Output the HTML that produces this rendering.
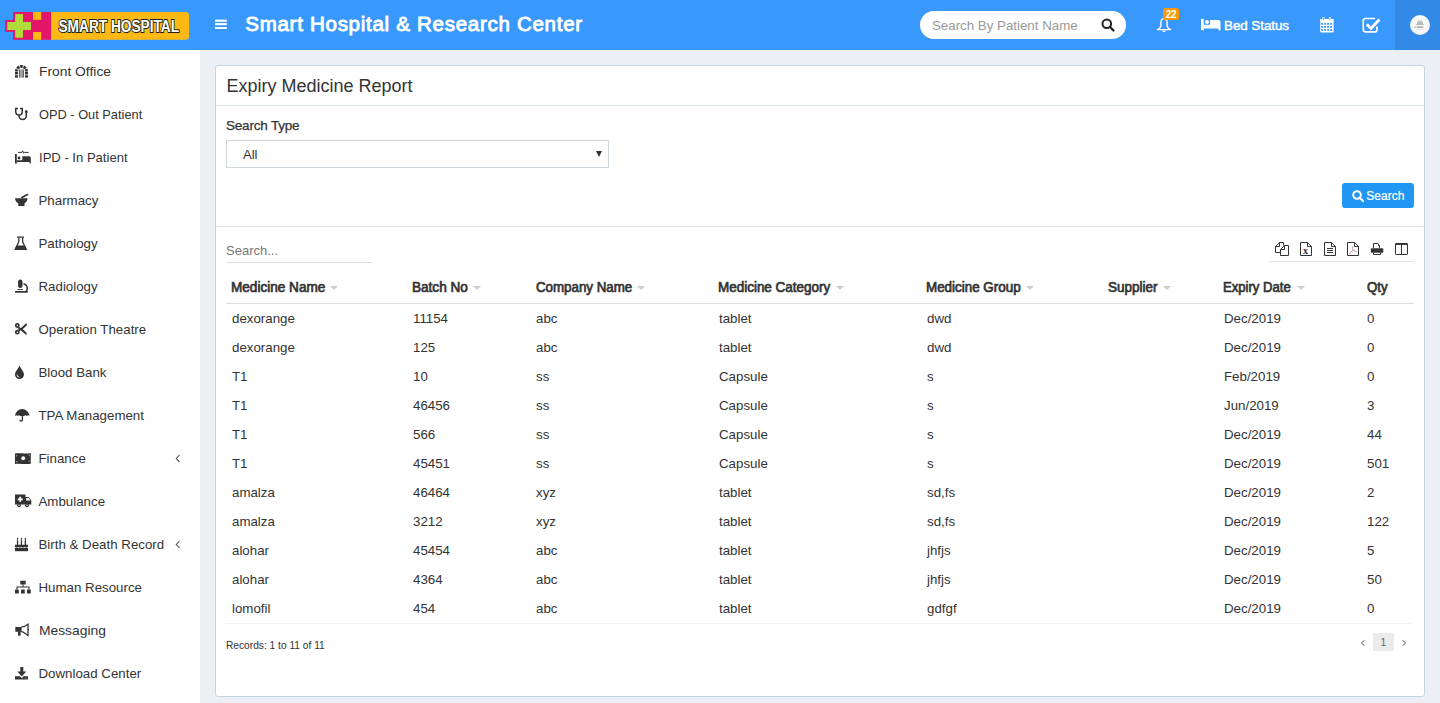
<!DOCTYPE html>
<html><head><meta charset="utf-8">
<style>
*{box-sizing:border-box;margin:0;padding:0}
html,body{width:1440px;height:703px;overflow:hidden;font-family:"Liberation Sans",sans-serif;background:#ecf0f5;color:#333;position:relative}
.t{position:absolute;white-space:nowrap;line-height:1}
svg{position:absolute;overflow:visible}
.hdr{position:absolute;left:0;top:0;width:1440px;height:50px;background:#3898fc}
.avb{position:absolute;left:1395px;top:0;width:45px;height:50px;background:#3289e6}
.srch{position:absolute;left:920px;top:11px;width:206px;height:28px;background:#fff;border-radius:14px}
.side{position:absolute;left:0;top:50px;width:200px;height:653px;background:#fff}
.nav{font-size:13.3px;color:#333}
.box{position:absolute;left:215px;top:65px;width:1210px;height:632px;background:#fff;border:1px solid #c5d5df;border-radius:3px}
.hl{position:absolute;height:1px}
.th{font-size:14px;color:#333;-webkit-text-stroke:0.7px #333;transform-origin:0 0}
.td{font-size:13.3px;color:#333}
.arr{position:absolute;width:0;height:0;border-left:4px solid transparent;border-right:4px solid transparent;border-top:4.5px solid #ccc}
</style></head><body>
<div class="hdr"></div>
<div class="avb"></div>
<!-- logo -->
<svg style="left:0;top:0" width="200" height="50" viewBox="0 0 200 50">
  <rect x="47" y="12" width="142" height="27.8" rx="3.5" fill="#fdb913"/>
  <rect x="13" y="12" width="38" height="27.8" fill="#e3166a"/>
  <rect x="5.1" y="20" width="8" height="11.8" fill="#e3166a"/>
  <path d="M15.1 14.1h7.9v8h8v7.9h-8v7.7h-7.9v-7.7h-7.9v-7.9h7.9z" fill="#b0dc3a"/>
  <rect x="33" y="12" width="8.2" height="7.8" fill="#fdb913"/>
  <rect x="33" y="32" width="8.2" height="7.8" fill="#fdb913"/>
  <text x="58.5" y="32.2" font-family="Liberation Sans" font-weight="bold" font-size="16.8" fill="#fff" stroke="#222" stroke-width="2" paint-order="stroke" textLength="120.5" lengthAdjust="spacingAndGlyphs">SMART HOSPITAL</text>
</svg>
<!-- burger -->
<svg style="left:215px;top:19px" width="12" height="11"><rect x="0" y="0.6" width="11.8" height="2.2" fill="#fff"/><rect x="0" y="4.1" width="11.8" height="2.1" fill="#fff"/><rect x="0" y="8" width="11.8" height="2" fill="#fff"/></svg>
<div class="t" style="left:245.3px;top:13.5px;font-size:20.5px;color:#fff;-webkit-text-stroke:0.9px #fff;letter-spacing:0.72px">Smart Hospital &amp; Research Center</div>
<div class="srch"></div>
<div class="t" style="left:932px;top:18.5px;font-size:13.3px;color:#999">Search By Patient Name</div>
<svg style="left:1101px;top:18px" width="14" height="14" viewBox="0 0 14 14"><circle cx="5.8" cy="5.8" r="4.3" fill="none" stroke="#222" stroke-width="2"/><path d="M9 9l3.5 3.5" stroke="#222" stroke-width="2.4" stroke-linecap="round"/></svg>
<!-- bell -->
<svg style="left:1156px;top:16px" width="16" height="18" viewBox="0 0 16 18"><path d="M8 2.6C5.9 2.6 4.9 4.3 4.9 6.5V9.8C4.9 11.6 3.3 12.7 1.5 13.6H14.5C12.7 12.7 11.1 11.6 11.1 9.8V6.5C11.1 4.3 10.1 2.6 8 2.6Z" fill="none" stroke="#fff" stroke-width="1.4" stroke-linejoin="round"/><path d="M6.3 14.4a1.7 1.7 0 0 0 3.4 0z" fill="#fff"/></svg>
<div style="position:absolute;left:1163px;top:8px;width:16px;height:12px;background:#ff9800;border-radius:2.5px"></div>
<div class="t" style="left:1163px;top:9.8px;width:16px;text-align:center;font-size:10px;font-weight:bold;color:#fff;letter-spacing:-0.3px">22</div>
<!-- bed -->
<svg style="left:1201px;top:18px" width="21" height="13" viewBox="0 0 21 13"><rect x="0" y="0.8" width="2.8" height="11.4" fill="#fff"/><circle cx="6" cy="3.9" r="2" fill="#fff"/><path d="M9 2h8.5a2 2 0 0 1 2 2v8.2h-2v-1.8H2.8V6.8H9z" fill="#fff"/></svg>
<div class="t" style="left:1224px;top:18.8px;font-size:13.4px;color:#fff;-webkit-text-stroke:0.45px #fff;letter-spacing:-0.05px">Bed Status</div>
<!-- calendar -->
<svg style="left:1319px;top:16px" width="16" height="17" viewBox="0 0 16 17">
<path d="M1.2 3h13.4v12.6a0.9 0.9 0 0 1-0.9 0.9H2.1a0.9 0.9 0 0 1-0.9-0.9z" fill="#fff"/>
<rect x="3.3" y="1" width="2.2" height="4" rx="1.1" fill="#fff"/><rect x="9.8" y="1" width="2.2" height="4" rx="1.1" fill="#fff"/>
<rect x="4" y="2" width="0.8" height="2.4" fill="#3898fc"/><rect x="10.5" y="2" width="0.8" height="2.4" fill="#3898fc"/>
<g fill="#3898fc"><rect x="2.2" y="7" width="1.9" height="1.8"/><rect x="5.2" y="7" width="1.9" height="1.8"/><rect x="8.2" y="7" width="1.9" height="1.8"/><rect x="11.2" y="7" width="1.9" height="1.8"/>
<rect x="2.2" y="10" width="1.9" height="1.8"/><rect x="5.2" y="10" width="1.9" height="1.8"/><rect x="8.2" y="10" width="1.9" height="1.8"/><rect x="11.2" y="10" width="1.9" height="1.8"/>
<rect x="2.2" y="13" width="1.9" height="1.8"/><rect x="5.2" y="13" width="1.9" height="1.8"/><rect x="8.2" y="13" width="1.9" height="1.8"/><rect x="11.2" y="13" width="1.9" height="1.8"/></g>
</svg>
<!-- check -->
<svg style="left:1362px;top:17px" width="20" height="16" viewBox="0 0 20 16"><path d="M14.9 9.5v3.5a1.8 1.8 0 0 1-1.8 1.8H3.1A1.8 1.8 0 0 1 1.3 13V3.3A1.8 1.8 0 0 1 3.1 1.5h10" fill="none" stroke="#fff" stroke-width="1.7"/><path d="M4.8 7.2l4.2 4.3 8.4-9" fill="none" stroke="#fff" stroke-width="2.8" stroke-linejoin="miter"/></svg>
<!-- avatar -->
<div style="position:absolute;left:1410px;top:15px;width:20px;height:20px;border-radius:50%;background:radial-gradient(circle at 50% 45%,#fafafa 45%,#e9e9e9 100%)"></div>
<svg style="left:1410px;top:15px" width="20" height="20" viewBox="0 0 20 20"><path d="M7 6.8h6v2.2H7z" fill="#bbb"/><path d="M8.3 5.3h3.4v1.5H8.3z" fill="#c4c4c4"/><rect x="6.2" y="9" width="7.6" height="0.8" fill="#aaa"/><rect x="4.2" y="11.5" width="1.6" height="1.2" fill="#aaa"/><rect x="6.5" y="11.2" width="6.8" height="1.8" fill="#b5b5b5"/><rect x="6.2" y="14" width="7.6" height="0.4" fill="#ccc"/></svg>

<div class="side"></div>
<div class="box"></div>
<!-- sidebar nav -->
<div class="t nav" style="left:38.5px;top:64.5px;transform:scaleX(1.04);transform-origin:0 0">Front Office</div>
<div class="t nav" style="left:38.5px;top:107.5px;transform:scaleX(0.963);transform-origin:0 0">OPD - Out Patient</div>
<div class="t nav" style="left:38.5px;top:150.5px;transform:scaleX(0.982);transform-origin:0 0">IPD - In Patient</div>
<div class="t nav" style="left:38.5px;top:193.5px">Pharmacy</div>
<div class="t nav" style="left:38.5px;top:236.5px">Pathology</div>
<div class="t nav" style="left:38.5px;top:279.5px">Radiology</div>
<div class="t nav" style="left:38.5px;top:322.5px">Operation Theatre</div>
<div class="t nav" style="left:38.5px;top:365.5px">Blood Bank</div>
<div class="t nav" style="left:38.5px;top:408.5px">TPA Management</div>
<div class="t nav" style="left:38.5px;top:451.5px">Finance</div>
<div class="t nav" style="left:38.5px;top:494.5px">Ambulance</div>
<div class="t nav" style="left:38.5px;top:537.5px">Birth &amp; Death Record</div>
<div class="t nav" style="left:38.5px;top:580.5px">Human Resource</div>
<div class="t nav" style="left:38.5px;top:623.5px;transform:scaleX(1.04);transform-origin:0 0">Messaging</div>
<div class="t nav" style="left:38.5px;top:666.5px">Download Center</div>
<svg style="left:175px;top:454px" width="6" height="9" viewBox="0 0 6 9"><path d="M4.5 1L1.3 4.5 4.5 8" fill="none" stroke="#444" stroke-width="1.05"/></svg>
<svg style="left:175px;top:540px" width="6" height="9" viewBox="0 0 6 9"><path d="M4.5 1L1.3 4.5 4.5 8" fill="none" stroke="#444" stroke-width="1.05"/></svg>
<!-- sidebar icons -->
<svg style="left:14px;top:64px" width="16" height="15" viewBox="0 0 16 15" fill="#333">
<path d="M2.5 7.4A5 5 0 0 1 12.5 7.4" fill="none" stroke="#333" stroke-width="3" stroke-dasharray="2.6 0.75" stroke-dashoffset="0.4"/>
<rect x="1" y="8" width="3" height="2.4"/><rect x="1" y="11.2" width="3" height="2.4"/>
<rect x="11" y="8" width="3" height="2.4"/><rect x="11" y="11.2" width="3" height="2.4"/>
<rect x="5.2" y="5.6" width="0.75" height="8"/><rect x="6.5" y="5.3" width="0.75" height="8.3"/><rect x="7.8" y="5.3" width="0.75" height="8.3"/><rect x="9.1" y="5.6" width="0.75" height="8"/>
</svg>
<svg style="left:14px;top:106px" width="16" height="16" viewBox="0 0 16 16">
<path d="M4 2.45H1.75V5.7A3.25 3.25 0 0 0 8.25 5.7V2.45H6" fill="none" stroke="#333" stroke-width="1.5"/>
<path d="M5 9.3V9.8A3.65 3.65 0 0 0 12.3 9.8V6.5" fill="none" stroke="#333" stroke-width="1.5"/>
<circle cx="12.3" cy="5.8" r="1.45" fill="#333"/>
</svg>
<svg style="left:14px;top:149px" width="18" height="16" viewBox="0 0 18 16" fill="#333">
<rect x="1" y="5" width="1.8" height="9.5"/>
<circle cx="5" cy="9" r="1.4"/>
<path d="M8.3 7.2h7a1.5 1.5 0 0 1 1.5 1.5v5.8h-1.2V13H2.8v-1.7h5.5z"/>
<path d="M4 3.4h3.8l0.9-1.6 0.9 2.4 0.8-0.8h4.2" fill="none" stroke="#333" stroke-width="1"/>
</svg>
<svg style="left:14px;top:193px" width="16" height="15" viewBox="0 0 16 15" fill="#333">
<path d="M1 5.3h12.6c-0.2 2.5-1.6 4.3-3.1 5.1v2.5H4.3v-2.5C2.7 9.6 1.2 7.8 1 5.3z"/>
<path d="M7.8 4.5l5.7-3" stroke="#333" stroke-width="1.6" stroke-linecap="round"/>
</svg>
<svg style="left:14px;top:235px" width="14" height="16" viewBox="0 0 14 16" fill="#333">
<rect x="3" y="1.5" width="7" height="1.3"/>
<path d="M4.8 2.8v4L1.2 14.3h11L8.6 6.8v-4" fill="none" stroke="#333" stroke-width="1.3"/>
<path d="M2.6 10.4h8.2l1.9 4.2H0.8z"/>
</svg>
<svg style="left:14px;top:278px" width="15" height="16" viewBox="0 0 15 16" fill="#333">
<rect x="4.1" y="1.6" width="4.4" height="8.4" rx="2.1"/>
<rect x="3.6" y="11" width="5.3" height="0.9"/>
<path d="M9.5 5.8c2.2 0.6 3.8 2.4 3.8 4.6 0 1.4-0.6 2.6-1.6 3.6" fill="none" stroke="#333" stroke-width="1.5"/>
<rect x="1" y="13" width="12.7" height="1.7"/>
</svg>
<svg style="left:14px;top:322px" width="14" height="14" viewBox="0 0 14 14">
<circle cx="3.3" cy="3.5" r="1.55" fill="none" stroke="#333" stroke-width="1.7"/>
<circle cx="3.3" cy="10.2" r="1.55" fill="none" stroke="#333" stroke-width="1.7"/>
<path d="M4.4 4.8L6.8 6.9 12.3 1.9 12.1 3.3 7.9 7.2 11.9 11 12.2 12.1 6.6 7.6 4.4 9" fill="#333" stroke="#333" stroke-width="1.1" stroke-linejoin="round"/>
</svg>
<svg style="left:14px;top:364px" width="12" height="16" viewBox="0 0 12 16">
<path d="M5.5 1.5C4.2 5 1 7.5 1 10.5a4.5 4.5 0 0 0 9 0C10 7.5 6.8 5 5.5 1.5z" fill="#333"/>
<path d="M3 10.5a2.4 2.4 0 0 0 2.4 2.6" fill="none" stroke="#fff" stroke-width="0.8"/>
</svg>
<svg style="left:14px;top:407px" width="17" height="15" viewBox="0 0 17 15" fill="#333">
<path d="M1 9C1.5 5.2 4.6 2 8.2 2S15 5.2 15.5 9c-0.8-0.9-1.8-0.9-2.6 0-0.8-0.9-2-0.9-2.8 0H6.3c-0.8-0.9-2-0.9-2.8 0C2.8 8.1 1.8 8.1 1 9z"/>
<path d="M8.4 9v3.8a1.2 1.2 0 0 1-2.4 0" fill="none" stroke="#333" stroke-width="1.3"/>
</svg>
<svg style="left:14px;top:452px" width="18" height="13" viewBox="0 0 18 13">
<path d="M1 1.5c5-0.8 10 0.6 15.8-0.6v10.8c-5.8 1-10.8-0.6-15.8 0.2z" fill="#333"/>
<circle cx="9.2" cy="6.2" r="2" fill="#fff"/>
<circle cx="2.8" cy="3.8" r="0.6" fill="#ddd"/><circle cx="2.8" cy="9.6" r="0.6" fill="#ddd"/><circle cx="15.2" cy="3" r="0.6" fill="#ddd"/><circle cx="15.2" cy="9" r="0.6" fill="#ddd"/>
</svg>
<svg style="left:14px;top:493px" width="18" height="15" viewBox="0 0 18 15" fill="#333">
<path d="M1 1.5h10.5v2.5h3l2.8 3.3v4.2H1z"/>
<path d="M12.2 5h2.3l2.1 2.6h-4.4z" fill="#fff"/>
<path d="M5.3 3.8h1.8v1.6h1.6v1.8H7.1v1.6H5.3V7.2H3.7V5.4h1.6z" fill="#fff"/>
<circle cx="5" cy="12.3" r="1.9"/><circle cx="13" cy="12.3" r="1.9"/>
<circle cx="5" cy="12.3" r="0.7" fill="#fff"/><circle cx="13" cy="12.3" r="0.7" fill="#fff"/>
</svg>
<svg style="left:14px;top:536px" width="15" height="16" viewBox="0 0 15 16" fill="#333">
<rect x="2.9" y="4.2" width="1.3" height="5"/><rect x="6.8" y="4.2" width="1.3" height="5"/><rect x="10.7" y="4.2" width="1.3" height="5"/>
<ellipse cx="3.55" cy="2.8" rx="0.7" ry="1.1"/><ellipse cx="7.45" cy="2.8" rx="0.7" ry="1.1"/><ellipse cx="11.35" cy="2.8" rx="0.7" ry="1.1"/>
<path d="M1 8.8h13v2.2c-1 0.8-2.2 0.8-3.2 0-1 0.8-2.2 0.8-3.2 0-1 0.8-2.2 0.8-3.2 0-1 0.8-2.2 0.8-3.4 0z"/>
<rect x="1" y="12" width="13" height="3.2"/>
</svg>
<svg style="left:14px;top:579px" width="18" height="16" viewBox="0 0 18 16" fill="#333">
<rect x="6.3" y="1.7" width="5.4" height="3.8" rx="0.5"/>
<path d="M9 5.5v2.3M3 10.5V8h12v2.5" fill="none" stroke="#333" stroke-width="1.1"/>
<rect x="1" y="10.5" width="3.8" height="4" rx="0.5"/><rect x="7" y="10.5" width="3.8" height="4" rx="0.5"/><rect x="13" y="10.5" width="3.8" height="4" rx="0.5"/>
</svg>
<svg style="left:14px;top:622px" width="16" height="15" viewBox="0 0 16 15">
<path d="M1.3 5H7.6V9.8H1.3z" fill="#333"/><path d="M4 9.6h2.6v4.1H4z" fill="#333"/>
<path d="M7.2 5.1C9.6 5 11.8 4 14 2.3V13.5C11.8 11.8 9.6 10 7.2 9.7" fill="none" stroke="#333" stroke-width="1.3"/>
<rect x="14" y="6.9" width="0.9" height="1.4" fill="#333"/>
</svg>
<svg style="left:14px;top:665px" width="15" height="16" viewBox="0 0 15 16" fill="#333">
<rect x="6.3" y="2" width="3" height="5.5"/>
<path d="M3.3 6.5h9l-4.5 5z"/>
<path d="M1 11.3h5l1.8 2 1.8-2H14v3.2H1z"/>
<circle cx="11.3" cy="13" r="0.4" fill="#bbb"/><circle cx="12.5" cy="13" r="0.4" fill="#bbb"/>
</svg>

<!-- box content -->
<div class="t" style="left:226.5px;top:76.5px;font-size:18px;color:#333">Expiry Medicine Report</div>
<div class="hl" style="left:216px;top:105px;width:1208px;background:#d9e3e7"></div>
<div class="t" style="left:226px;top:118.8px;font-size:13.5px;color:#333;letter-spacing:-0.2px;-webkit-text-stroke:0.25px #333">Search Type</div>
<div style="position:absolute;left:226px;top:140px;width:383px;height:28px;border:1px solid #cfd6dc;background:#fff"></div>
<div class="t" style="left:243px;top:147.8px;font-size:13px;color:#333">All</div>
<div class="arr" style="left:595.7px;top:150.5px;border-left-width:3.2px;border-right-width:3.2px;border-top:6px solid #333"></div>
<div style="position:absolute;left:1342px;top:183px;width:72px;height:25px;background:#2196f3;border-radius:3px"></div>
<svg style="left:1352px;top:190px" width="13" height="13" viewBox="0 0 13 13"><circle cx="5" cy="5" r="3.8" fill="none" stroke="#fff" stroke-width="2"/><path d="M7.8 7.8l3.2 3.2" stroke="#fff" stroke-width="2.2" stroke-linecap="round"/></svg>
<div class="t" style="left:1366.3px;top:190px;font-size:12px;color:#fff;-webkit-text-stroke:0.2px #fff">Search</div>
<div class="hl" style="left:216px;top:226px;width:1208px;background:#d9e3e7"></div>
<div class="t" style="left:226px;top:244px;font-size:13px;color:#777">Search...</div>
<div class="hl" style="left:226px;top:262px;width:146px;background:#ddd"></div>
<div class="hl" style="left:1269px;top:261px;width:145px;background:#e3e3e3"></div>
<!-- export icons -->
<svg style="left:1264px;top:236px" width="156" height="30" viewBox="1264 236 156 30" fill="none" stroke="#333" stroke-width="1">
<path d="M1283.5 245.5V242.5H1279.5L1275.5 246.5V252.5H1280.5"/><path d="M1279.5 242.5V246.5H1275.5"/>
<path d="M1280.5 249.5L1284.5 245.5H1288.5V255.5H1280.5Z"/><path d="M1284.5 245.5V249.5H1280.5"/>
<path d="M1300.5 242.5H1307.5L1311.5 246.5V255.5H1300.5Z"/><path d="M1307.5 242.5V246.5H1311.5"/>
<text x="1303.1" y="253.9" font-family="Liberation Serif" font-size="10" font-weight="bold" fill="#333" stroke="none">x</text>
<path d="M1324.5 242.5H1331.5L1335.5 246.5V255.5H1324.5Z"/><path d="M1331.5 242.5V246.5H1335.5"/>
<path d="M1327 248.5H1333M1327 250.5H1333M1327 252.5H1333"/>
<path d="M1347.5 242.5H1354.5L1358.5 246.5V255.5H1347.5Z"/><path d="M1354.5 242.5V246.5H1358.5"/>
<path d="M1352.6 246.2L1352.8 250.2L1349.3 254M1352.8 250.2L1356.6 251.5" stroke="#a78" stroke-width="0.7"/>
<path d="M1379.5 248V245.5L1377.5 243.5H1373.5V248"/><path d="M1378.5 243.5V245.5H1380"/>
<rect x="1370.8" y="248.3" width="12.5" height="4.4" rx="0.8" fill="#333" stroke="none"/>
<path d="M1373.5 252.5V254.5H1380.5V252.5"/>
<rect x="1395.5" y="243.5" width="12" height="11" rx="0.6"/><path d="M1395.5 244.2H1407.5" stroke-width="1.5"/><path d="M1401.5 243.5V254.5"/>
</svg>
<!-- footer -->
<div class="t" style="left:226px;top:640.5px;font-size:10.2px;color:#333">Records: 1 to 11 of 11</div>
<div style="position:absolute;left:1373px;top:633px;width:21px;height:18px;background:#ebebeb"></div>
<div class="t" style="left:1380.4px;top:638.3px;font-size:10.4px;color:#666">1</div>
<svg style="left:1358px;top:637px" width="10" height="12" viewBox="0 0 10 12"><path d="M6.3 3.2L3.6 6 6.3 8.8" fill="none" stroke="#555" stroke-width="1"/></svg>
<svg style="left:1399px;top:637px" width="10" height="12" viewBox="0 0 10 12"><path d="M3.7 3.2L6.4 6 3.7 8.8" fill="none" stroke="#555" stroke-width="1"/></svg>
<!-- table head -->
<div class="t th" style="left:231.4px;top:280px;transform:scaleX(0.97)">Medicine Name</div>
<div class="arr" style="left:330px;top:286px"></div>
<div class="t th" style="left:412.4px;top:280px;transform:scaleX(0.969)">Batch No</div>
<div class="arr" style="left:473px;top:286px"></div>
<div class="t th" style="left:536.2px;top:280px;transform:scaleX(0.951)">Company Name</div>
<div class="arr" style="left:636.5px;top:286px"></div>
<div class="t th" style="left:718.4px;top:280px;transform:scaleX(0.961)">Medicine Category</div>
<div class="arr" style="left:835.5px;top:286px"></div>
<div class="t th" style="left:926.4px;top:280px;transform:scaleX(0.957)">Medicine Group</div>
<div class="arr" style="left:1026px;top:286px"></div>
<div class="t th" style="left:1108.3px;top:280px;transform:scaleX(0.961)">Supplier</div>
<div class="arr" style="left:1162.5px;top:286px"></div>
<div class="t th" style="left:1223.4px;top:280px;transform:scaleX(0.935)">Expiry Date</div>
<div class="arr" style="left:1297px;top:286px"></div>
<div class="t th" style="left:1367.2px;top:280px;transform:scaleX(0.95)">Qty</div>
<div class="hl" style="left:226px;top:303px;width:1188px;background:#ddd"></div>
<!-- rows -->
<div class="t td" style="left:232px;top:311.7px">dexorange</div>
<div class="t td" style="left:413px;top:311.7px">11154</div>
<div class="t td" style="left:536px;top:311.7px">abc</div>
<div class="t td" style="left:719px;top:311.7px">tablet</div>
<div class="t td" style="left:927px;top:311.7px">dwd</div>
<div class="t td" style="left:1224px;top:311.7px">Dec/2019</div>
<div class="t td" style="left:1367px;top:311.7px">0</div>
<div class="t td" style="left:232px;top:340.7px">dexorange</div>
<div class="t td" style="left:413px;top:340.7px">125</div>
<div class="t td" style="left:536px;top:340.7px">abc</div>
<div class="t td" style="left:719px;top:340.7px">tablet</div>
<div class="t td" style="left:927px;top:340.7px">dwd</div>
<div class="t td" style="left:1224px;top:340.7px">Dec/2019</div>
<div class="t td" style="left:1367px;top:340.7px">0</div>
<div class="t td" style="left:232px;top:369.7px">T1</div>
<div class="t td" style="left:413px;top:369.7px">10</div>
<div class="t td" style="left:536px;top:369.7px">ss</div>
<div class="t td" style="left:719px;top:369.7px">Capsule</div>
<div class="t td" style="left:927px;top:369.7px">s</div>
<div class="t td" style="left:1224px;top:369.7px">Feb/2019</div>
<div class="t td" style="left:1367px;top:369.7px">0</div>
<div class="t td" style="left:232px;top:398.7px">T1</div>
<div class="t td" style="left:413px;top:398.7px">46456</div>
<div class="t td" style="left:536px;top:398.7px">ss</div>
<div class="t td" style="left:719px;top:398.7px">Capsule</div>
<div class="t td" style="left:927px;top:398.7px">s</div>
<div class="t td" style="left:1224px;top:398.7px">Jun/2019</div>
<div class="t td" style="left:1367px;top:398.7px">3</div>
<div class="t td" style="left:232px;top:427.7px">T1</div>
<div class="t td" style="left:413px;top:427.7px">566</div>
<div class="t td" style="left:536px;top:427.7px">ss</div>
<div class="t td" style="left:719px;top:427.7px">Capsule</div>
<div class="t td" style="left:927px;top:427.7px">s</div>
<div class="t td" style="left:1224px;top:427.7px">Dec/2019</div>
<div class="t td" style="left:1367px;top:427.7px">44</div>
<div class="t td" style="left:232px;top:456.7px">T1</div>
<div class="t td" style="left:413px;top:456.7px">45451</div>
<div class="t td" style="left:536px;top:456.7px">ss</div>
<div class="t td" style="left:719px;top:456.7px">Capsule</div>
<div class="t td" style="left:927px;top:456.7px">s</div>
<div class="t td" style="left:1224px;top:456.7px">Dec/2019</div>
<div class="t td" style="left:1367px;top:456.7px">501</div>
<div class="t td" style="left:232px;top:485.7px">amalza</div>
<div class="t td" style="left:413px;top:485.7px">46464</div>
<div class="t td" style="left:536px;top:485.7px">xyz</div>
<div class="t td" style="left:719px;top:485.7px">tablet</div>
<div class="t td" style="left:927px;top:485.7px">sd,fs</div>
<div class="t td" style="left:1224px;top:485.7px">Dec/2019</div>
<div class="t td" style="left:1367px;top:485.7px">2</div>
<div class="t td" style="left:232px;top:514.7px">amalza</div>
<div class="t td" style="left:413px;top:514.7px">3212</div>
<div class="t td" style="left:536px;top:514.7px">xyz</div>
<div class="t td" style="left:719px;top:514.7px">tablet</div>
<div class="t td" style="left:927px;top:514.7px">sd,fs</div>
<div class="t td" style="left:1224px;top:514.7px">Dec/2019</div>
<div class="t td" style="left:1367px;top:514.7px">122</div>
<div class="t td" style="left:232px;top:543.7px">alohar</div>
<div class="t td" style="left:413px;top:543.7px">45454</div>
<div class="t td" style="left:536px;top:543.7px">abc</div>
<div class="t td" style="left:719px;top:543.7px">tablet</div>
<div class="t td" style="left:927px;top:543.7px">jhfjs</div>
<div class="t td" style="left:1224px;top:543.7px">Dec/2019</div>
<div class="t td" style="left:1367px;top:543.7px">5</div>
<div class="t td" style="left:232px;top:572.7px">alohar</div>
<div class="t td" style="left:413px;top:572.7px">4364</div>
<div class="t td" style="left:536px;top:572.7px">abc</div>
<div class="t td" style="left:719px;top:572.7px">tablet</div>
<div class="t td" style="left:927px;top:572.7px">jhfjs</div>
<div class="t td" style="left:1224px;top:572.7px">Dec/2019</div>
<div class="t td" style="left:1367px;top:572.7px">50</div>
<div class="t td" style="left:232px;top:601.7px">lomofil</div>
<div class="t td" style="left:413px;top:601.7px">454</div>
<div class="t td" style="left:536px;top:601.7px">abc</div>
<div class="t td" style="left:719px;top:601.7px">tablet</div>
<div class="t td" style="left:927px;top:601.7px">gdfgf</div>
<div class="t td" style="left:1224px;top:601.7px">Dec/2019</div>
<div class="t td" style="left:1367px;top:601.7px">0</div>
<div class="hl" style="left:226px;top:623px;width:1187px;background:#f2f2f2"></div>
</body></html>
